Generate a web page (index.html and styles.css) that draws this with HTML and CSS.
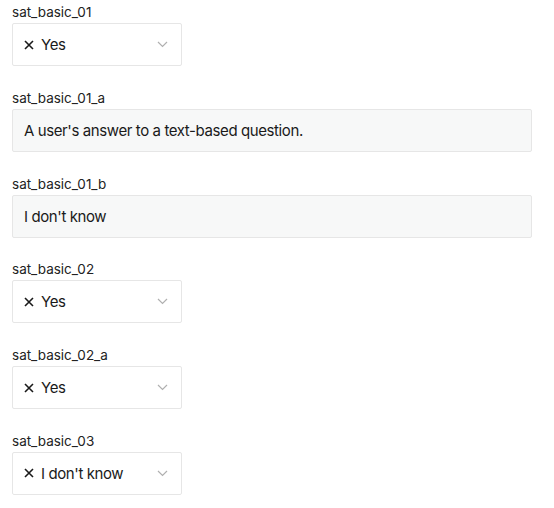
FILE: index.html
```html
<!DOCTYPE html>
<html>
<head>
<meta charset="utf-8">
<link rel="stylesheet" href="styles.css">
</head>
<body>
<div class="form">
  <div class="field">
    <div class="label">sat_basic_01</div>
    <div class="select">
      <span class="x"><svg width="10" height="10" viewBox="0 0 10 10"><path d="M1 1L9 9M9 1L1 9" stroke="#1a1a1a" stroke-width="1.6"/></svg></span>
      <span class="value">Yes</span>
      <svg class="chev" width="11" height="7" viewBox="0 0 11 7"><path d="M1 1L5.5 5.5L10 1" fill="none" stroke="#b0b0b0" stroke-width="1.2"/></svg>
    </div>
  </div>
  <div class="field">
    <div class="label">sat_basic_01_a</div>
    <div class="text">A user's answer to a text-based question.</div>
  </div>
  <div class="field">
    <div class="label">sat_basic_01_b</div>
    <div class="text">I don't know</div>
  </div>
  <div class="field">
    <div class="label">sat_basic_02</div>
    <div class="select">
      <span class="x"><svg width="10" height="10" viewBox="0 0 10 10"><path d="M1 1L9 9M9 1L1 9" stroke="#1a1a1a" stroke-width="1.6"/></svg></span>
      <span class="value">Yes</span>
      <svg class="chev" width="11" height="7" viewBox="0 0 11 7"><path d="M1 1L5.5 5.5L10 1" fill="none" stroke="#b0b0b0" stroke-width="1.2"/></svg>
    </div>
  </div>
  <div class="field">
    <div class="label">sat_basic_02_a</div>
    <div class="select">
      <span class="x"><svg width="10" height="10" viewBox="0 0 10 10"><path d="M1 1L9 9M9 1L1 9" stroke="#1a1a1a" stroke-width="1.6"/></svg></span>
      <span class="value">Yes</span>
      <svg class="chev" width="11" height="7" viewBox="0 0 11 7"><path d="M1 1L5.5 5.5L10 1" fill="none" stroke="#b0b0b0" stroke-width="1.2"/></svg>
    </div>
  </div>
  <div class="field">
    <div class="label">sat_basic_03</div>
    <div class="select">
      <span class="x"><svg width="10" height="10" viewBox="0 0 10 10"><path d="M1 1L9 9M9 1L1 9" stroke="#1a1a1a" stroke-width="1.6"/></svg></span>
      <span class="value">I don't know</span>
      <svg class="chev" width="11" height="7" viewBox="0 0 11 7"><path d="M1 1L5.5 5.5L10 1" fill="none" stroke="#b0b0b0" stroke-width="1.2"/></svg>
    </div>
  </div>
</div>
</body>
</html>
```
FILE: styles.css
```css
html, body {
  margin: 0;
  padding: 0;
  background: #ffffff;
}
body {
  font-family: Inter, "Noto Sans", sans-serif;
  color: #1a1a1a;
}
.form {
  padding: 3px 22px 0 12px;
  display: flex;
  flex-direction: column;
  gap: 22.8px;
}
.field {
  display: flex;
  flex-direction: column;
  gap: 2px;
}
.label {
  font-size: 13.5px;
  line-height: 18px;
  color: #222;
}
.select {
  box-sizing: border-box;
  width: 170px;
  height: 43px;
  border: 1px solid #e6e6e6;
  border-radius: 2px;
  background: #fff;
  display: flex;
  align-items: center;
  padding: 0 13px 0 11px;
  font-size: 15px;
  letter-spacing: -0.4px;
}
.x {
  display: flex;
  align-items: center;
  margin-right: 7px;
}
.value {
  flex: 1;
}
.chev {
  display: block;
}
.text {
  box-sizing: border-box;
  height: 43px;
  border: 1px solid #e6e6e6;
  border-radius: 2px;
  background: #f7f8f8;
  display: flex;
  align-items: center;
  padding: 0 11px;
  font-size: 15px;
  letter-spacing: -0.4px;
}
```
